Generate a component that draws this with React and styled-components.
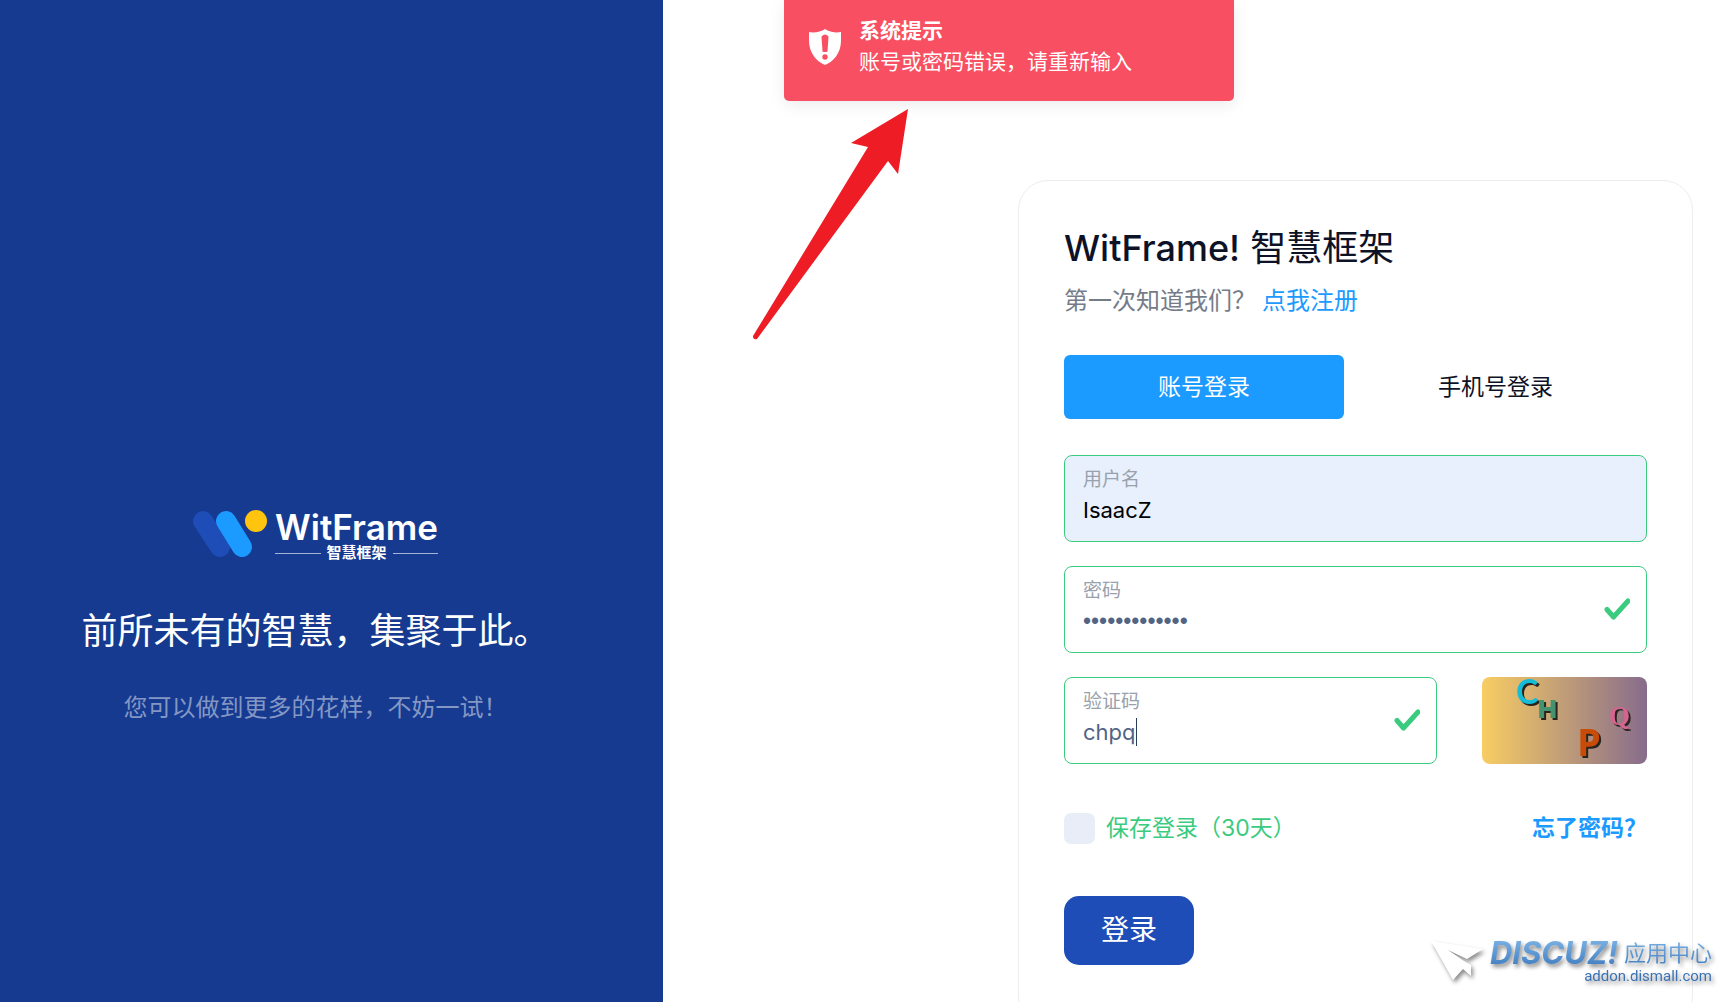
import { useState } from "react"
import styled, { createGlobalStyle } from "styled-components"

const tabs = ["账号登录", "手机号登录"]

const captcha = [
    { char: "C", x: 34, y: 27, size: 34, color: "#14bcd6", font: "Lato", weight: 700 },
    { char: "H", x: 56, y: 41, size: 25, color: "#45926f", font: "Inter", weight: 900 },
    { char: "P", x: 95, y: 79, size: 38, color: "#c84b08", font: "Open Sans", weight: 700 },
    { char: "Q", x: 127, y: 48, size: 27, color: "#d6648f", font: "Liberation Serif", weight: 700 },
]

const Tick = () => (
    <TickIcon viewBox="0 0 26 22" aria-hidden="true">
        <path d="M3 11.500 L9.500 19 L24 3" />
    </TickIcon>
)

const Logo = () => (
    <LogoRow>
        <LogoMark viewBox="0 0 76 48" aria-hidden="true">
            <path d="M10 11 L27 37" stroke="#1e4db7" />
            <path d="M33 11 L49 37" stroke="#1b9aff" />
            <circle cx="63" cy="11" r="11" fill="#ffc40d" />
        </LogoMark>
        <LogoText>
            <strong>WitFrame</strong>
            <LogoSub>智慧框架</LogoSub>
        </LogoText>
    </LogoRow>
)

const Notice = () => (
    <NoticeBox role="alert">
        <svg width="34" height="38" viewBox="0 0 34 38" aria-hidden="true">
            <path d="M17 1 C21 4 28 5 33 4 V13 C33 25 25 34 17 37 C9 34 1 25 1 13 V4 C6 5 13 4 17 1 Z" fill="#fff" />
            <path d="M14.500 9 Q17 6 19.500 9 L18.500 23 H15.500 Z" fill="#f84f62" stroke="#f84f62" strokeLinejoin="round" strokeWidth="2" />
            <circle cx="17" cy="29" r="2.700" fill="#f84f62" />
        </svg>
        <div>
            <b>系统提示</b>
            <p>账号或密码错误，请重新输入</p>
        </div>
    </NoticeBox>
)

const Captcha = () => (
    <CaptchaButton type="button" aria-label="验证码">
        <svg viewBox="0 0 165 87">
            {captcha.map(c => (
                <text key={c.char} x={c.x} y={c.y} fontSize={c.size} fontFamily={c.font} fontWeight={c.weight} fill={c.color}>
                    {c.char}
                </text>
            ))}
        </svg>
    </CaptchaButton>
)

const Watermark = () => (
    <WatermarkBox>
        <svg width="56" height="42" viewBox="0 0 56 42" aria-hidden="true">
            <path d="M1 1 L53 9 L37 19 L18 10 L34 21 L41 25 V36 L33 29 L23 40 Z" fill="#fff" />
        </svg>
        <div>
            <WatermarkTitle>
                <em>DISCUZ!</em>
                <span>应用中心</span>
            </WatermarkTitle>
            <WatermarkUrl>addon.dismall.com</WatermarkUrl>
        </div>
    </WatermarkBox>
)

const App = () => {
    const [tab, setTab] = useState(0)
    const [user, setUser] = useState("IsaacZ")
    const [password, setPassword] = useState("witframe12345")
    const [code, setCode] = useState("chpq")
    const [save, setSave] = useState(false)

    return (
        <Page>
            <GlobalStyle />
            <Side>
                <Logo />
                <h2>前所未有的智慧，集聚于此。</h2>
                <p>您可以做到更多的花样，不妨一试！</p>
            </Side>
            <Main>
                <Card onSubmit={e => e.preventDefault()}>
                    <h1><span>WitFrame!</span> 智慧框架</h1>
                    <Intro>第一次知道我们？<a href="#register">点我注册</a></Intro>
                    <Tabs>
                        {tabs.map((t, i) => (
                            <Tab key={t} type="button" $active={tab === i} onClick={() => setTab(i)}>{t}</Tab>
                        ))}
                    </Tabs>
                    <Fields>
                        <Field $filled>
                            <label htmlFor="user">用户名</label>
                            <Input id="user" $dark value={user} onChange={e => setUser(e.target.value)} />
                        </Field>
                        <Field>
                            <label htmlFor="password">密码</label>
                            <Input id="password" type="password" value={password} onChange={e => setPassword(e.target.value)} />
                            <Tick />
                        </Field>
                        <CodeRow>
                            <Field>
                                <label htmlFor="code">验证码</label>
                                <InputLine>
                                    <Input id="code" $fit value={code} onChange={e => setCode(e.target.value)} />
                                    <Caret />
                                </InputLine>
                                <Tick />
                            </Field>
                            <Captcha />
                        </CodeRow>
                    </Fields>
                    <Options>
                        <Save>
                            <input type="checkbox" checked={save} onChange={e => setSave(e.target.checked)} />
                            保存登录（30天）
                        </Save>
                        <a href="#forgot">忘了密码？</a>
                    </Options>
                    <Submit type="submit">登录</Submit>
                </Card>
            </Main>
            <Notice />
            <Arrow viewBox="0 0 156 232" aria-hidden="true">
                <path d="M156 1 L99 35 L116 39 L1 228 Q1 232 5 231 L136 53 L146 66 Z" />
            </Arrow>
            <Watermark />
        </Page>
    )
}

const GlobalStyle = createGlobalStyle`
    * {
        box-sizing: border-box;
    }

    body, h1, h2, p {
        margin: 0;
    }

    body, input, button {
        font-family: Inter, "Noto Sans CJK SC", sans-serif;
    }

    a {
        color: #1b9aff;
        text-decoration: none;
    }
`

const Page = styled.div`
    position: relative;
    display: flex;
    height: 100vh;
    overflow: hidden;
    background: #fff;
`

const Side = styled.aside`
    display: flex;
    flex-direction: column;
    align-items: center;
    justify-content: center;
    width: 663px;
    flex-shrink: 0;
    padding: 234px 32px 0 0;
    background: #153a90;
    color: #fff;

    h2 {
        margin-top: 42px;
        font-size: 36px;
        line-height: 54px;
        font-weight: 400;
    }

    p {
        margin-top: 32px;
        font-size: 24px;
        line-height: 36px;
        color: #8497c4;
    }
`

const LogoRow = styled.div`
    display: flex;
    gap: 6px;
`

const LogoMark = styled.svg`
    width: 76px;
    height: 48px;

    path {
        stroke-width: 20;
        stroke-linecap: round;
    }
`

const LogoText = styled.div`
    display: flex;
    flex-direction: column;

    strong {
        font-size: 35px;
        line-height: 34px;
        font-weight: 600;
    }
`

const LogoSub = styled.span`
    display: flex;
    align-items: center;
    gap: 6px;
    font-size: 15px;
    line-height: 18px;
    font-weight: 700;

    &::before, &::after {
        content: "";
        flex: 1;
        height: 1px;
        background: #a5b3d4;
    }
`

const Main = styled.main`
    display: flex;
    flex: 1;
    justify-content: flex-end;
    align-items: flex-start;
    padding: 180px 37px 0 0;
`

const Card = styled.form`
    width: 675px;
    padding: 45px 45px 60px;
    border: 1px solid #ededf0;
    border-radius: 30px;

    h1 {
        font-size: 36px;
        line-height: 44px;
        font-weight: 400;
        color: #0e1226;
    }

    h1 span {
        font-weight: 500;
    }
`

const Intro = styled.p`
    margin-top: 13px;
    font-size: 24px;
    line-height: 36px;
    color: #757c88;

    a {
        margin-left: 6px;
    }
`

const Tabs = styled.div`
    display: flex;
    margin-top: 36px;
`

const Tab = styled.button`
    flex: 1 1 auto;
    height: 64px;
    padding: 0 0 5px;
    border: 0;
    border-radius: 6px;
    font-size: 23px;
    background: ${p => p.$active ? "#1b9aff" : "transparent"};
    color: ${p => p.$active ? "#fff" : "#0e1226"};
`

const Fields = styled.div`
    display: flex;
    flex-direction: column;
    gap: 24px;
    margin-top: 36px;
`

const Field = styled.div`
    position: relative;
    display: flex;
    flex-direction: column;
    flex: 1;
    min-width: 0;
    min-height: 87px;
    padding: 10px 18px;
    border: 1px solid #3acb7f;
    border-radius: 8px;
    background: ${p => p.$filled ? "#e8f0fe" : "#fff"};

    label {
        font-size: 19px;
        line-height: 28px;
        color: #98a1ac;
    }
`

const Input = styled.input`
    width: ${p => p.$fit ? "auto" : "100%"};
    field-sizing: ${p => p.$fit ? "content" : "fixed"};
    height: 32px;
    padding: 0;
    border: 0;
    outline: 0;
    background: transparent;
    font-size: 22px;
    color: ${p => p.$dark ? "#000" : "#526484"};

    &[type="password"] {
        font-family: "Liberation Sans", sans-serif;
        font-size: 23px;
    }
`

const InputLine = styled.div`
    display: flex;
    align-items: center;
`

const Caret = styled.span`
    width: 1px;
    height: 28px;
    background: #2c3c5c;
`

const TickIcon = styled.svg`
    position: absolute;
    top: 31px;
    right: 16px;
    width: 26px;
    height: 22px;

    path {
        fill: none;
        stroke: #3acb7f;
        stroke-width: 5;
        stroke-linecap: round;
        stroke-linejoin: round;
    }
`

const CodeRow = styled.div`
    display: flex;
    gap: 45px;
`

const CaptchaButton = styled.button`
    width: 165px;
    height: 87px;
    padding: 0;
    border: 0;
    border-radius: 8px;
    background: linear-gradient(to right, #f8cd63, #876c8c);

    svg {
        display: block;
        overflow: visible;
    }

    text {
        filter: drop-shadow(2px 2px 0 #2a2420);
    }
`

const Options = styled.div`
    display: flex;
    align-items: center;
    justify-content: space-between;
    margin-top: 46px;
    font-size: 23px;
    line-height: 36px;

    a {
        font-weight: 700;
    }
`

const Save = styled.label`
    display: flex;
    align-items: center;
    gap: 11px;
    color: #3acb7f;

    input {
        appearance: none;
        width: 31px;
        height: 31px;
        margin: 0;
        border-radius: 7px;
        background: #e9edf7;
    }

    input:checked {
        background: #1b9aff;
    }
`

const Submit = styled.button`
    display: block;
    margin-top: 50px;
    height: 69px;
    padding: 0 37px 5px;
    border: 0;
    border-radius: 15px;
    background: #1e4db7;
    color: #fff;
    font-size: 28px;
`

const NoticeBox = styled.div`
    position: absolute;
    top: 0;
    left: 784px;
    display: flex;
    align-items: flex-start;
    gap: 17px;
    width: 450px;
    padding: 15px 24px 24px;
    border-radius: 0 0 5px 5px;
    background: #f84f62;
    box-shadow: 0 4px 16px rgba(0, 0, 0, .08);
    color: #fff;
    font-size: 21px;
    line-height: 31px;

    b {
        display: block;
    }

    svg {
        margin-top: 13px;
    }
`

const Arrow = styled.svg`
    position: absolute;
    top: 108px;
    left: 752px;
    width: 156px;
    height: 232px;
    fill: #ee1c24;
`

const WatermarkBox = styled.div`
    position: absolute;
    right: 18px;
    bottom: 16px;
    display: flex;
    align-items: flex-start;
    gap: 4px;
    filter: drop-shadow(2px 3px 2px rgba(0, 0, 0, .45));
`

const WatermarkTitle = styled.div`
    display: flex;
    align-items: center;
    height: 26px;
    gap: 6px;

    em, span {
        background: linear-gradient(#7db4e6, #3f7cc0);
        background-clip: text;
        color: transparent;
    }

    em {
        font-size: 31px;
        line-height: 30px;
        font-weight: 700;
    }

    span {
        font-size: 22px;
        line-height: 30px;
    }
`

const WatermarkUrl = styled.div`
    font-family: Roboto, sans-serif;
    font-size: 15px;
    line-height: 20px;
    text-align: right;
    color: #3b72b4;
`

export default App
